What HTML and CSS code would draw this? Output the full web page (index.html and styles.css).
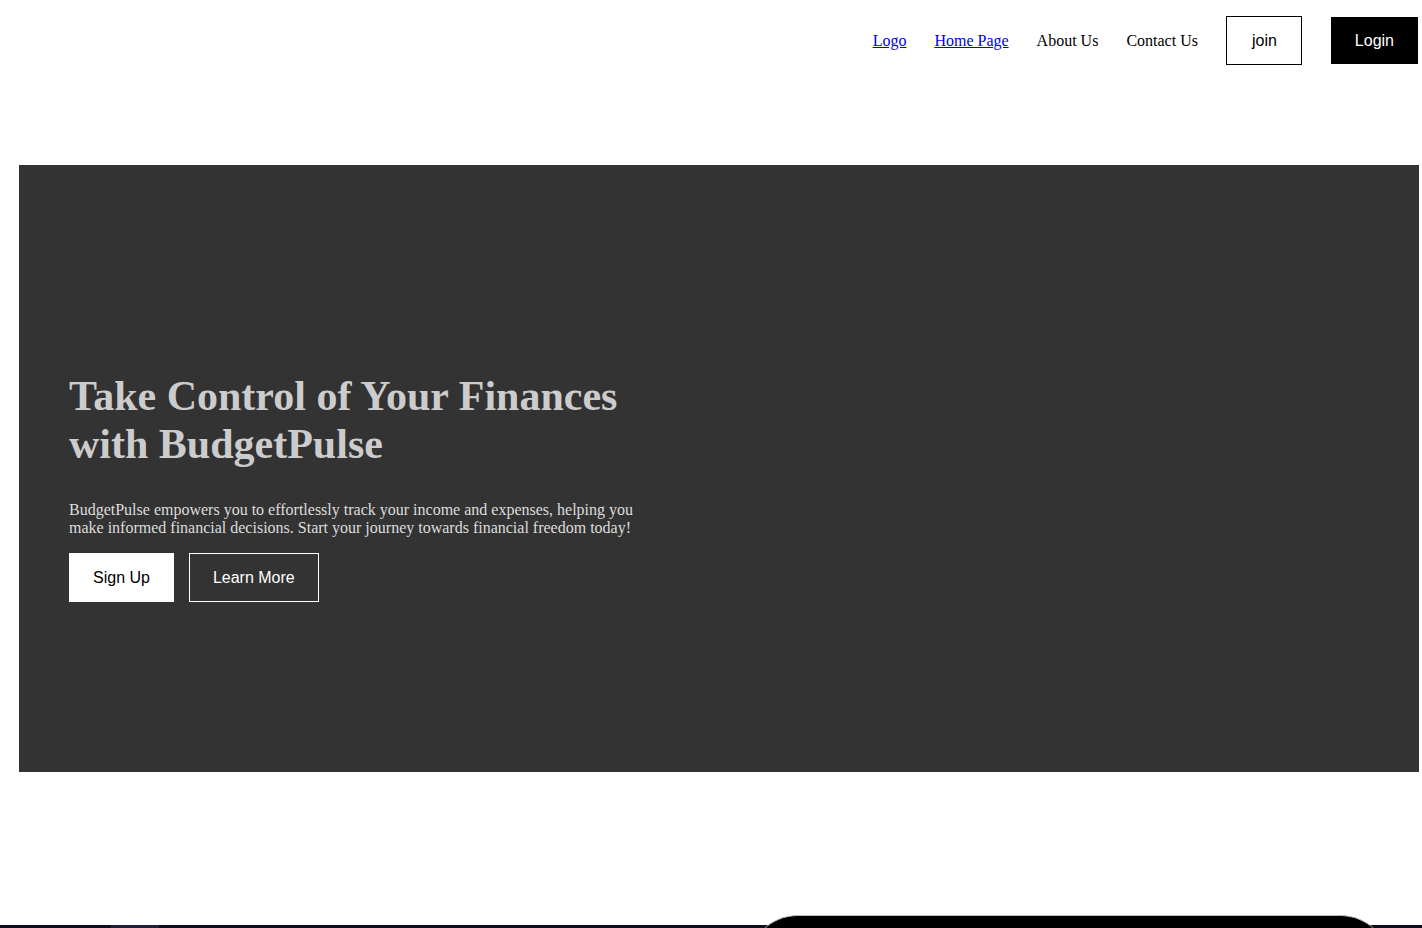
FILE: index.html
```html
<!DOCTYPE html>
<html lang="en">
<head>
<meta charset="utf-8">
<title>BudgetPulse</title>
<link rel="stylesheet" href="styles.css">
</head>
<body>
<header class="topbar">
  <nav class="nav">
    <a class="nav-link" href="#">Logo</a>
    <a class="nav-link" href="#">Home Page</a>
    <span class="nav-text">About Us</span>
    <span class="nav-text">Contact Us</span>
    <button class="btn btn-outline-dark">join</button>
    <button class="btn btn-solid-dark">Login</button>
  </nav>
</header>
<main>
  <section class="hero">
    <div class="hero-content">
      <h1 class="hero-title">Take Control of Your Finances with BudgetPulse</h1>
      <p class="hero-text">BudgetPulse empowers you to effortlessly track your income and expenses, helping you make informed financial decisions. Start your journey towards financial freedom today!</p>
      <div class="hero-actions">
        <button class="btn btn-light">Sign Up</button>
        <button class="btn btn-outline-light">Learn More</button>
      </div>
    </div>
  </section>
  <section class="next">
    <div class="next-patch"></div>
    <div class="next-pill"></div>
  </section>
</main>
</body>
</html>
```
FILE: styles.css
```css
html, body {
  margin: 0;
  padding: 0;
  background: #ffffff;
  font-family: "Liberation Serif", "Times New Roman", serif;
}

.topbar {
  padding: 16px 4px 0 0;
}

.nav {
  display: flex;
  justify-content: flex-end;
  align-items: center;
  gap: 28px;
}

.nav-link {
  font-size: 16px;
  color: #0000ee;
  text-decoration: underline;
}

.nav-text {
  font-size: 16px;
  color: #000;
}

.btn {
  font-family: "Liberation Sans", Arial, sans-serif;
  font-size: 16px;
  line-height: 19px;
  padding: 14px 24px;
  margin: 0;
  cursor: pointer;
}

.btn-outline-dark {
  background: #fff;
  color: #000;
  border: 1px solid #000;
  padding-left: 25px;
}

.btn-solid-dark {
  background: #000;
  color: #fff;
  border: 0;
  margin-left: 1px;
}

.hero {
  margin: 100px 0 0 19px;
  width: 1400px;
  background: #333333;
  padding: 207px 0 170px 50px;
  box-sizing: border-box;
}

.hero-content {
  width: 600px;
}

.hero-title {
  margin: 0 0 33px;
  font-size: 42px;
  line-height: 48px;
  font-weight: bold;
  color: #cccccc;
}

.hero-text {
  margin: 0 0 16px;
  font-size: 16px;
  color: #dddddd;
}

.hero-actions {
  display: flex;
  gap: 15px;
}

.hero-actions .btn {
  padding-left: 23px;
  padding-right: 23px;
}

.btn-light {
  background: #fff;
  color: #000;
  border: 1px solid #fff;
}

.btn-outline-light {
  background: transparent;
  color: #fff;
  border: 1px solid #fff;
}

.next {
  position: relative;
  margin-top: 153px;
  height: 200px;
  background: #100d1f;
}

.next-patch {
  position: absolute;
  left: 111px;
  top: 0;
  width: 48px;
  height: 3px;
  background: #231d3d;
}

.next-pill {
  position: absolute;
  left: 748px;
  top: -10px;
  width: 642px;
  height: 120px;
  background: #000;
  border-radius: 50px;
  border-top: 1px solid #bbbbbb;
  box-sizing: border-box;
}
```
